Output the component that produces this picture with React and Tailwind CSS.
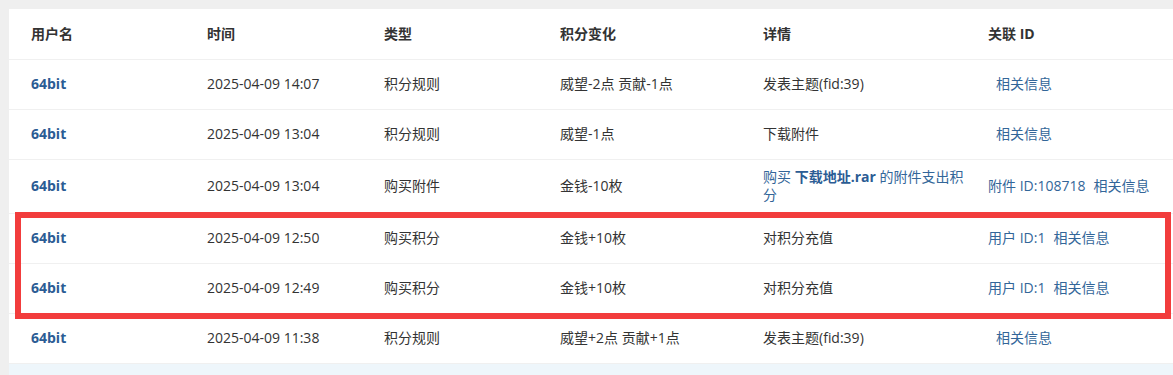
import React from 'react';

const rows = [
  { user: '64bit', time: '2025-04-09 14:07', type: '积分规则', change: '威望-2点 贡献-1点', detail: '发表主题(fid:39)', rel: [null, '相关信息'] },
  { user: '64bit', time: '2025-04-09 13:04', type: '积分规则', change: '威望-1点', detail: '下载附件', rel: [null, '相关信息'] },
  { user: '64bit', time: '2025-04-09 13:04', type: '购买附件', change: '金钱-10枚', detail: 'attach', rel: ['附件 ID:108718', '相关信息'], tall: true },
  { user: '64bit', time: '2025-04-09 12:50', type: '购买积分', change: '金钱+10枚', detail: '对积分充值', rel: ['用户 ID:1', '相关信息'] },
  { user: '64bit', time: '2025-04-09 12:49', type: '购买积分', change: '金钱+10枚', detail: '对积分充值', rel: ['用户 ID:1', '相关信息'] },
  { user: '64bit', time: '2025-04-09 11:38', type: '积分规则', change: '威望+2点 贡献+1点', detail: '发表主题(fid:39)', rel: [null, '相关信息'] },
];

const font = { fontFamily: '"Open Sans", "Noto Sans CJK SC", sans-serif' };

export default function App() {
  return (
    <div className="h-[375px] bg-[#efefef] pl-[9px] pt-[9px] overflow-hidden" style={font}>
      <div className="relative bg-white">
        <table className="w-full table-fixed border-collapse text-[14px] text-[#333]">
          <colgroup>
            <col className="w-[176px]" />
            <col className="w-[177px]" />
            <col className="w-[176px]" />
            <col className="w-[203px]" />
            <col className="w-[225px]" />
            <col />
          </colgroup>
          <thead>
            <tr className="h-[50px] border-b border-[#f0f0f0] text-left">
              <th className="pl-[22px] font-bold">用户名</th>
              <th className="pl-[22px] font-bold">时间</th>
              <th className="pl-[22px] font-bold">类型</th>
              <th className="pl-[22px] font-bold">积分变化</th>
              <th className="pl-[22px] font-bold">详情</th>
              <th className="pl-[22px] font-bold">关联 ID</th>
            </tr>
          </thead>
          <tbody>
            {rows.map((r, i) => (
              <tr key={i} className={`border-b border-[#f0f0f0] ${r.tall ? 'h-[54px]' : 'h-[50px]'}`}>
                <td className="pl-[22px] pb-[1px] font-bold text-[#2b5c94]">{r.user}</td>
                <td className="pl-[22px] pb-[1px]">{r.time}</td>
                <td className="pl-[22px] pb-[1px]">{r.type}</td>
                <td className="pl-[22px] pb-[1px]">{r.change}</td>
                <td className="pl-[22px] pr-[2px] pb-[1px] leading-[18px]">
                  {r.detail === 'attach' ? (
                    <span className="text-[#336699]">
                      购买 <b className="text-[#2b5c94]">下载地址.rar</b> 的附件支出积分
                    </span>
                  ) : (
                    r.detail
                  )}
                </td>
                <td className="pl-[22px] pb-[1px] text-[#336699] whitespace-nowrap">
                  {r.rel[0] ? <span className="mr-[8px]">{r.rel[0]}</span> : <span className="ml-[8px]" />}
                  <span>{r.rel[1]}</span>
                </td>
              </tr>
            ))}
          </tbody>
        </table>
        <div className="h-[20px] bg-[#eef6fb]" />
        {/* highlight annotation */}
        <div className="absolute left-[6px] top-[203px] w-[1156px] h-[107px] border-[6px] border-[#f23c3c] pointer-events-none" />
      </div>
    </div>
  );
}
